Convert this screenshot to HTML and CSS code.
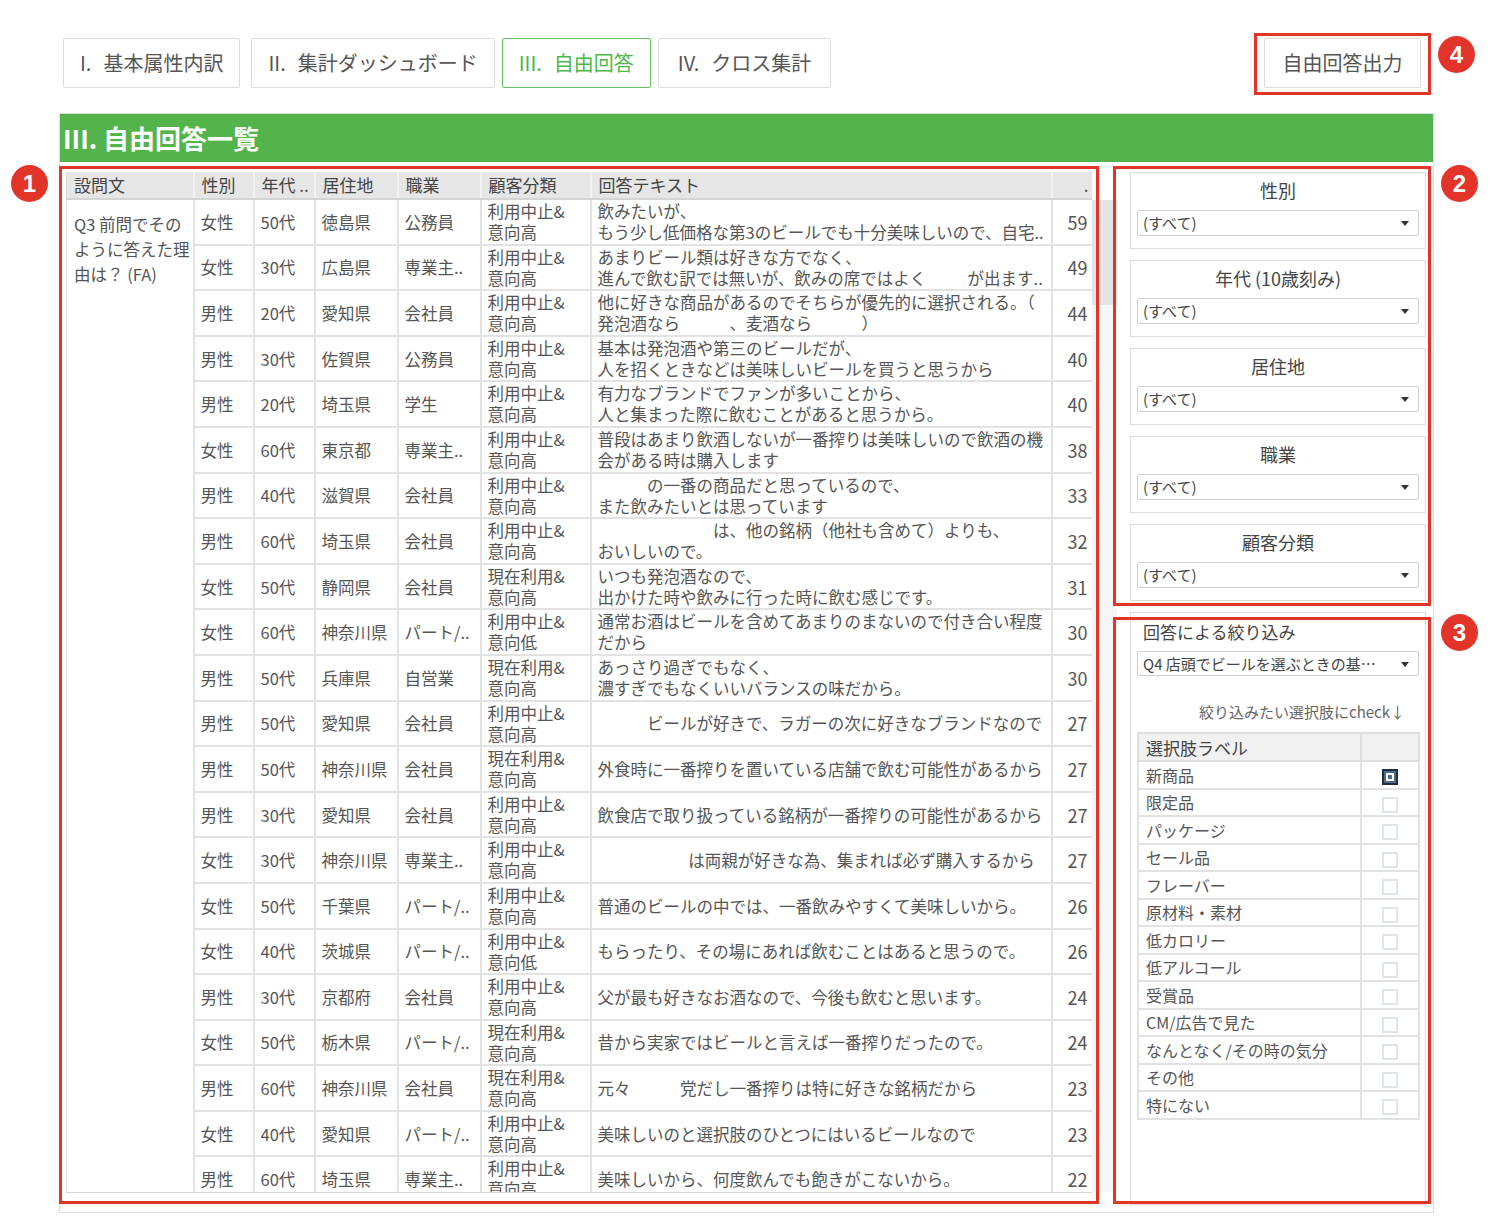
FILE: index.html
```html
<!DOCTYPE html>
<html lang="ja">
<head>
    <meta charset="UTF-8">
    <meta name="viewport" content="width=device-width, initial-scale=1.0">
    <title>自由回答一覧</title>
    <link rel="stylesheet" href="styles.css">
</head>
<body>
<div class="page">
    <header class="topbar">
        <nav class="tabs">
            <div class="tab"><span class="num">I.</span>基本属性内訳</div>
            <div class="tab tab-gap"><span class="num">II.</span>集計ダッシュボード</div>
            <div class="tab active"><span class="num">III.</span>自由回答</div>
            <div class="tab tab-wide"><span class="num">IV.</span>クロス集計</div>
        </nav>
        <div class="export">自由回答出力</div>
    </header>

    <section class="panel">
        <h1 class="panel-title">III. 自由回答一覧</h1>
        <div class="panel-body">
            <div class="results">
                <div class="table-scroll">
                    <table class="answers">
                        <colgroup>
                            <col class="c-q"><col class="c-sex"><col class="c-age"><col class="c-pref">
                            <col class="c-job"><col class="c-seg"><col class="c-text"><col class="c-num">
                        </colgroup>
                        <thead>
                            <tr>
                                <th>設問文</th><th>性別</th><th>年代 ..</th><th>居住地</th>
                                <th>職業</th><th>顧客分類</th><th>回答テキスト</th><th class="num">.</th>
                            </tr>
                        </thead>
                        <tbody>
                            <tr>
                                <td class="question" rowspan="22">Q3 前問でその<br>ように答えた理<br>由は？ (FA)</td>
                                <td><div class="cell">女性</div></td><td><div class="cell">50代</div></td><td><div class="cell">徳島県</div></td><td><div class="cell">公務員</div></td>
                                <td><div class="cell two">利用中止&amp;<br>意向高</div></td>
                                <td class="text"><div class="cell two">飲みたいが、<br>もう少し低価格な第3のビールでも十分美味しいので、自宅..</div></td>
                                <td class="num"><div class="cell">59</div></td>
                            </tr>
                            <tr>
                                <td><div class="cell">女性</div></td><td><div class="cell">30代</div></td><td><div class="cell">広島県</div></td><td><div class="cell">専業主..</div></td>
                                <td><div class="cell two">利用中止&amp;<br>意向高</div></td>
                                <td class="text"><div class="cell two">あまりビール類は好きな方でなく、<br>進んで飲む訳では無いが、飲みの席ではよく　　&#8194;が出ます..</div></td>
                                <td class="num"><div class="cell">49</div></td>
                            </tr>
                            <tr>
                                <td><div class="cell">男性</div></td><td><div class="cell">20代</div></td><td><div class="cell">愛知県</div></td><td><div class="cell">会社員</div></td>
                                <td><div class="cell two">利用中止&amp;<br>意向高</div></td>
                                <td class="text"><div class="cell two">他に好きな商品があるのでそちらが優先的に選択される。（<br>発泡酒なら　　　、麦酒なら　　　）</div></td>
                                <td class="num"><div class="cell">44</div></td>
                            </tr>
                            <tr>
                                <td><div class="cell">男性</div></td><td><div class="cell">30代</div></td><td><div class="cell">佐賀県</div></td><td><div class="cell">公務員</div></td>
                                <td><div class="cell two">利用中止&amp;<br>意向高</div></td>
                                <td class="text"><div class="cell two">基本は発泡酒や第三のビールだが、<br>人を招くときなどは美味しいビールを買うと思うから</div></td>
                                <td class="num"><div class="cell">40</div></td>
                            </tr>
                            <tr>
                                <td><div class="cell">男性</div></td><td><div class="cell">20代</div></td><td><div class="cell">埼玉県</div></td><td><div class="cell">学生</div></td>
                                <td><div class="cell two">利用中止&amp;<br>意向高</div></td>
                                <td class="text"><div class="cell two">有力なブランドでファンが多いことから、<br>人と集まった際に飲むことがあると思うから。</div></td>
                                <td class="num"><div class="cell">40</div></td>
                            </tr>
                            <tr>
                                <td><div class="cell">女性</div></td><td><div class="cell">60代</div></td><td><div class="cell">東京都</div></td><td><div class="cell">専業主..</div></td>
                                <td><div class="cell two">利用中止&amp;<br>意向高</div></td>
                                <td class="text"><div class="cell two">普段はあまり飲酒しないが一番搾りは美味しいので飲酒の機<br>会がある時は購入します</div></td>
                                <td class="num"><div class="cell">38</div></td>
                            </tr>
                            <tr>
                                <td><div class="cell">男性</div></td><td><div class="cell">40代</div></td><td><div class="cell">滋賀県</div></td><td><div class="cell">会社員</div></td>
                                <td><div class="cell two">利用中止&amp;<br>意向高</div></td>
                                <td class="text"><div class="cell two">　　　の一番の商品だと思っているので、<br>また飲みたいとは思っています</div></td>
                                <td class="num"><div class="cell">33</div></td>
                            </tr>
                            <tr>
                                <td><div class="cell">男性</div></td><td><div class="cell">60代</div></td><td><div class="cell">埼玉県</div></td><td><div class="cell">会社員</div></td>
                                <td><div class="cell two">利用中止&amp;<br>意向高</div></td>
                                <td class="text"><div class="cell two">　　　　　　　は、他の銘柄（他社も含めて）よりも、<br>おいしいので。</div></td>
                                <td class="num"><div class="cell">32</div></td>
                            </tr>
                            <tr>
                                <td><div class="cell">女性</div></td><td><div class="cell">50代</div></td><td><div class="cell">静岡県</div></td><td><div class="cell">会社員</div></td>
                                <td><div class="cell two">現在利用&amp;<br>意向高</div></td>
                                <td class="text"><div class="cell two">いつも発泡酒なので、<br>出かけた時や飲みに行った時に飲む感じです。</div></td>
                                <td class="num"><div class="cell">31</div></td>
                            </tr>
                            <tr>
                                <td><div class="cell">女性</div></td><td><div class="cell">60代</div></td><td><div class="cell">神奈川県</div></td><td><div class="cell">パート/..</div></td>
                                <td><div class="cell two">利用中止&amp;<br>意向低</div></td>
                                <td class="text"><div class="cell two">通常お酒はビールを含めてあまりのまないので付き合い程度<br>だから</div></td>
                                <td class="num"><div class="cell">30</div></td>
                            </tr>
                            <tr>
                                <td><div class="cell">男性</div></td><td><div class="cell">50代</div></td><td><div class="cell">兵庫県</div></td><td><div class="cell">自営業</div></td>
                                <td><div class="cell two">現在利用&amp;<br>意向高</div></td>
                                <td class="text"><div class="cell two">あっさり過ぎでもなく、<br>濃すぎでもなくいいバランスの味だから。</div></td>
                                <td class="num"><div class="cell">30</div></td>
                            </tr>
                            <tr>
                                <td><div class="cell">男性</div></td><td><div class="cell">50代</div></td><td><div class="cell">愛知県</div></td><td><div class="cell">会社員</div></td>
                                <td><div class="cell two">利用中止&amp;<br>意向高</div></td>
                                <td class="text"><div class="cell">　　　ビールが好きで、ラガーの次に好きなブランドなので</div></td>
                                <td class="num"><div class="cell">27</div></td>
                            </tr>
                            <tr>
                                <td><div class="cell">男性</div></td><td><div class="cell">50代</div></td><td><div class="cell">神奈川県</div></td><td><div class="cell">会社員</div></td>
                                <td><div class="cell two">現在利用&amp;<br>意向高</div></td>
                                <td class="text"><div class="cell">外食時に一番搾りを置いている店舗で飲む可能性があるから</div></td>
                                <td class="num"><div class="cell">27</div></td>
                            </tr>
                            <tr>
                                <td><div class="cell">男性</div></td><td><div class="cell">30代</div></td><td><div class="cell">愛知県</div></td><td><div class="cell">会社員</div></td>
                                <td><div class="cell two">利用中止&amp;<br>意向高</div></td>
                                <td class="text"><div class="cell">飲食店で取り扱っている銘柄が一番搾りの可能性があるから</div></td>
                                <td class="num"><div class="cell">27</div></td>
                            </tr>
                            <tr>
                                <td><div class="cell">女性</div></td><td><div class="cell">30代</div></td><td><div class="cell">神奈川県</div></td><td><div class="cell">専業主..</div></td>
                                <td><div class="cell two">利用中止&amp;<br>意向高</div></td>
                                <td class="text"><div class="cell">　　　　　&#8194;は両親が好きな為、集まれば必ず購入するから</div></td>
                                <td class="num"><div class="cell">27</div></td>
                            </tr>
                            <tr>
                                <td><div class="cell">女性</div></td><td><div class="cell">50代</div></td><td><div class="cell">千葉県</div></td><td><div class="cell">パート/..</div></td>
                                <td><div class="cell two">利用中止&amp;<br>意向高</div></td>
                                <td class="text"><div class="cell">普通のビールの中では、一番飲みやすくて美味しいから。</div></td>
                                <td class="num"><div class="cell">26</div></td>
                            </tr>
                            <tr>
                                <td><div class="cell">女性</div></td><td><div class="cell">40代</div></td><td><div class="cell">茨城県</div></td><td><div class="cell">パート/..</div></td>
                                <td><div class="cell two">利用中止&amp;<br>意向低</div></td>
                                <td class="text"><div class="cell">もらったり、その場にあれば飲むことはあると思うので。</div></td>
                                <td class="num"><div class="cell">26</div></td>
                            </tr>
                            <tr>
                                <td><div class="cell">男性</div></td><td><div class="cell">30代</div></td><td><div class="cell">京都府</div></td><td><div class="cell">会社員</div></td>
                                <td><div class="cell two">利用中止&amp;<br>意向高</div></td>
                                <td class="text"><div class="cell">父が最も好きなお酒なので、今後も飲むと思います。</div></td>
                                <td class="num"><div class="cell">24</div></td>
                            </tr>
                            <tr>
                                <td><div class="cell">女性</div></td><td><div class="cell">50代</div></td><td><div class="cell">栃木県</div></td><td><div class="cell">パート/..</div></td>
                                <td><div class="cell two">現在利用&amp;<br>意向高</div></td>
                                <td class="text"><div class="cell">昔から実家ではビールと言えば一番搾りだったので。</div></td>
                                <td class="num"><div class="cell">24</div></td>
                            </tr>
                            <tr>
                                <td><div class="cell">男性</div></td><td><div class="cell">60代</div></td><td><div class="cell">神奈川県</div></td><td><div class="cell">会社員</div></td>
                                <td><div class="cell two">現在利用&amp;<br>意向高</div></td>
                                <td class="text"><div class="cell">元々　　　党だし一番搾りは特に好きな銘柄だから</div></td>
                                <td class="num"><div class="cell">23</div></td>
                            </tr>
                            <tr>
                                <td><div class="cell">女性</div></td><td><div class="cell">40代</div></td><td><div class="cell">愛知県</div></td><td><div class="cell">パート/..</div></td>
                                <td><div class="cell two">利用中止&amp;<br>意向高</div></td>
                                <td class="text"><div class="cell">美味しいのと選択肢のひとつにはいるビールなので</div></td>
                                <td class="num"><div class="cell">23</div></td>
                            </tr>
                            <tr>
                                <td><div class="cell">男性</div></td><td><div class="cell">60代</div></td><td><div class="cell">埼玉県</div></td><td><div class="cell">専業主..</div></td>
                                <td><div class="cell two">利用中止&amp;<br>意向高</div></td>
                                <td class="text"><div class="cell">美味しいから、何度飲んでも飽きがこないから。</div></td>
                                <td class="num"><div class="cell">22</div></td>
                            </tr>
                        </tbody>
                    </table>
                </div>
                <div class="scrollbar"><div class="thumb"></div></div>
            </div>

            <aside class="sidebar">
                <div class="filter">
                    <div class="filter-label">性別</div>
                    <div class="select">(すべて)</div>
                </div>
                <div class="filter">
                    <div class="filter-label">年代 (10歳刻み)</div>
                    <div class="select">(すべて)</div>
                </div>
                <div class="filter">
                    <div class="filter-label">居住地</div>
                    <div class="select">(すべて)</div>
                </div>
                <div class="filter">
                    <div class="filter-label">職業</div>
                    <div class="select">(すべて)</div>
                </div>
                <div class="filter">
                    <div class="filter-label">顧客分類</div>
                    <div class="select">(すべて)</div>
                </div>

                <div class="narrow">
                    <div class="narrow-title">回答による絞り込み</div>
                    <div class="select">Q4 店頭でビールを選ぶときの基…</div>
                    <div class="hint">絞り込みたい選択肢にcheck↓</div>
                    <table class="choices">
                        <thead>
                            <tr><th>選択肢ラベル</th><th class="check-col"></th></tr>
                        </thead>
                        <tbody>
                            <tr><td>新商品</td><td class="check-col"><span class="box checked"></span></td></tr>
                            <tr><td>限定品</td><td class="check-col"><span class="box"></span></td></tr>
                            <tr><td>パッケージ</td><td class="check-col"><span class="box"></span></td></tr>
                            <tr><td>セール品</td><td class="check-col"><span class="box"></span></td></tr>
                            <tr><td>フレーバー</td><td class="check-col"><span class="box"></span></td></tr>
                            <tr><td>原材料・素材</td><td class="check-col"><span class="box"></span></td></tr>
                            <tr><td>低カロリー</td><td class="check-col"><span class="box"></span></td></tr>
                            <tr><td>低アルコール</td><td class="check-col"><span class="box"></span></td></tr>
                            <tr><td>受賞品</td><td class="check-col"><span class="box"></span></td></tr>
                            <tr><td>CM/広告で見た</td><td class="check-col"><span class="box"></span></td></tr>
                            <tr><td>なんとなく/その時の気分</td><td class="check-col"><span class="box"></span></td></tr>
                            <tr><td>その他</td><td class="check-col"><span class="box"></span></td></tr>
                            <tr><td>特にない</td><td class="check-col"><span class="box"></span></td></tr>
                        </tbody>
                    </table>
                </div>
            </aside>
        </div>
    </section>

    <!-- annotation markers -->
    <div class="mark mark-1"></div>
    <div class="mark mark-2"></div>
    <div class="mark mark-3"></div>
    <div class="mark mark-4"></div>
    <div class="badge badge-1">1</div>
    <div class="badge badge-2">2</div>
    <div class="badge badge-3">3</div>
    <div class="badge badge-4">4</div>
</div>
</body>
</html>
```

FILE: styles.css
```css
/* Reset */
body, h1, table {
    margin: 0;
    padding: 0;
}

body {
    font-family: "Noto Sans CJK JP", "Noto Sans", sans-serif;
    color: #555;
    background-color: #fff;
}

.page {
    position: relative;
    width: 1502px;
    height: 1230px;
    overflow: hidden;
}

/* Top navigation */
.topbar {
    display: flex;
    justify-content: space-between;
    align-items: flex-start;
    padding: 38px 81px 0 63px;
}

.tabs {
    display: flex;
    gap: 7px;
}

.tab {
    height: 50px;
    box-sizing: border-box;
    padding: 0 16px;
    border: 1px solid #dcdcdc;
    border-radius: 2px;
    font-size: 20px;
    line-height: 48px;
    color: #555;
    white-space: nowrap;
}

.tab-gap {
    margin-left: 4px;
}

.tab-wide {
    padding: 0 19px;
}

.tab .num {
    margin-right: 12px;
}

.tab.active {
    border-color: #62c35e;
    color: #4cb848;
}

.export {
    width: 157px;
    height: 50px;
    box-sizing: border-box;
    border: 1px solid #dcdcdc;
    border-radius: 2px;
    font-size: 20px;
    line-height: 48px;
    text-align: center;
}

/* Main panel */
.panel {
    margin: 25px 0 0 59px;
    width: 1375px;
    box-sizing: border-box;
    border: 1px solid #dedede;
}

.panel-title {
    height: 48px;
    padding-left: 3px;
    background-color: #52b44a;
    color: #fff;
    font-size: 26px;
    font-weight: bold;
    line-height: 48px;
}

.panel-body {
    display: flex;
    padding: 10px 0 7px 6px;
}

/* Answer table */
.results {
    display: flex;
}

.table-scroll {
    width: 1026px;
    height: 1020px;
    overflow: hidden;
    border-bottom: 1px solid #d6d6d6;
}

.scrollbar {
    width: 25px;
    height: 992px;
    margin-top: 28px;
    background-color: #f6f6f6;
}

.thumb {
    height: 105px;
    background-color: #e4e4e4;
}

.answers {
    width: 1026px;
    table-layout: fixed;
    border-collapse: collapse;
    font-size: 16.5px;
}

.c-q { width: 127px; }
.c-sex { width: 60px; }
.c-age { width: 61px; }
.c-pref { width: 83px; }
.c-job { width: 83px; }
.c-seg { width: 110px; }
.c-text { width: 461px; }
.c-num { width: 41px; }

.answers th {
    height: 26px;
    padding: 0 7px;
    background-color: #e6e6e6;
    border-left: 2px solid #f2f2f2;
    border-bottom: 2px solid #d4d4d4;
    color: #444;
    font-size: 17px;
    font-weight: normal;
    text-align: left;
    line-height: 26px;
    white-space: nowrap;
    overflow: hidden;
}

.answers th:first-child {
    border-left: 1px solid #dcdcdc;
}

.answers td {
    padding: 0 6px;
    border: 2px solid #e2e2e2;
    vertical-align: middle;
}

.answers td.text {
    padding: 0 1px 0 6px;
}

.answers th.num,
.answers td.num {
    text-align: right;
    padding-right: 4px;
}

.answers td.num {
    font-size: 18px;
}

.answers td.question {
    vertical-align: top;
    padding: 12px 4px 0 7px;
    border-left: 1px solid #dcdcdc;
    line-height: 25px;
    white-space: nowrap;
}

.cell {
    height: 43.6px;
    box-sizing: border-box;
    display: flex;
    flex-direction: column;
    justify-content: center;
    line-height: 24px;
    white-space: nowrap;
    overflow: hidden;
}

.cell.two {
    display: block;
    padding-top: 1px;
    line-height: 21px;
}

/* Sidebar filters */
.sidebar {
    width: 296px;
    margin-left: 13px;
    display: flex;
    flex-direction: column;
    gap: 11px;
}

.filter {
    box-sizing: border-box;
    padding: 5px 6px 12px;
    border: 1px solid #dcdcdc;
    text-align: center;
}

.filter-label {
    font-size: 18px;
    line-height: 24px;
    color: #444;
}

.select {
    position: relative;
    height: 26px;
    box-sizing: border-box;
    margin-top: 8px;
    padding-left: 5px;
    border: 1px solid #cfcfcf;
    border-radius: 2px;
    text-align: left;
    font-size: 15px;
    line-height: 24px;
    color: #444;
    white-space: nowrap;
    overflow: hidden;
}

.select::after {
    content: "";
    position: absolute;
    right: 9px;
    top: 10px;
    border-left: 4px solid transparent;
    border-right: 4px solid transparent;
    border-top: 5px solid #333;
}

/* Narrow by answer */
.narrow {
    height: 593px;
    box-sizing: border-box;
    padding: 7px 6px 0;
    border: 1px solid #dcdcdc;
}

.narrow-title {
    padding-left: 6px;
    font-size: 17px;
    line-height: 24px;
    color: #444;
}

.narrow .select {
    height: 25px;
    margin-top: 7px;
    line-height: 23px;
}

.hint {
    margin-top: 24px;
    padding-right: 14px;
    text-align: right;
    font-size: 15px;
    line-height: 24px;
    color: #666;
}

.choices {
    width: 283px;
    margin-top: 8px;
    border-collapse: collapse;
    font-size: 16px;
}

.choices th {
    height: 26px;
    padding: 0 7px;
    background-color: #f1f1f1;
    border: 2px solid #dedede;
    font-size: 17px;
    font-weight: normal;
    text-align: left;
    color: #444;
}

.choices td {
    height: 25.5px;
    padding: 0 7px;
    border: 2px solid #e2e2e2;
    line-height: 20px;
    white-space: nowrap;
}

.choices .check-col {
    width: 42px;
    text-align: center;
}

.box {
    display: inline-block;
    position: relative;
    width: 12px;
    height: 12px;
    border: 2px solid #dfe5ec;
    vertical-align: middle;
}

.box.checked {
    border-color: #1f2d3d;
    background-color: #4d6a8f;
}

.box.checked::after {
    content: "";
    position: absolute;
    left: 2px;
    top: 2px;
    width: 4px;
    height: 4px;
    border: 2px solid #fff;
}

/* Annotation overlays */
.mark {
    position: absolute;
    box-sizing: border-box;
    border: 3px solid #e3342a;
}

.mark-1 { left: 59px; top: 166px; width: 1040px; height: 1038px; }
.mark-2 { left: 1113px; top: 166px; width: 318px; height: 440px; }
.mark-3 { left: 1113px; top: 617px; width: 318px; height: 587px; }
.mark-4 { left: 1254px; top: 33px; width: 177px; height: 62px; }

.badge {
    position: absolute;
    width: 37px;
    height: 37px;
    border-radius: 50%;
    background-color: #e3342a;
    color: #fff;
    font-family: "Liberation Sans", Arial, sans-serif;
    font-size: 24px;
    font-weight: bold;
    line-height: 37px;
    text-align: center;
}

.badge-1 { left: 11px; top: 165px; }
.badge-2 { left: 1441px; top: 165px; }
.badge-3 { left: 1441px; top: 614px; }
.badge-4 { left: 1438px; top: 36px; }
```
